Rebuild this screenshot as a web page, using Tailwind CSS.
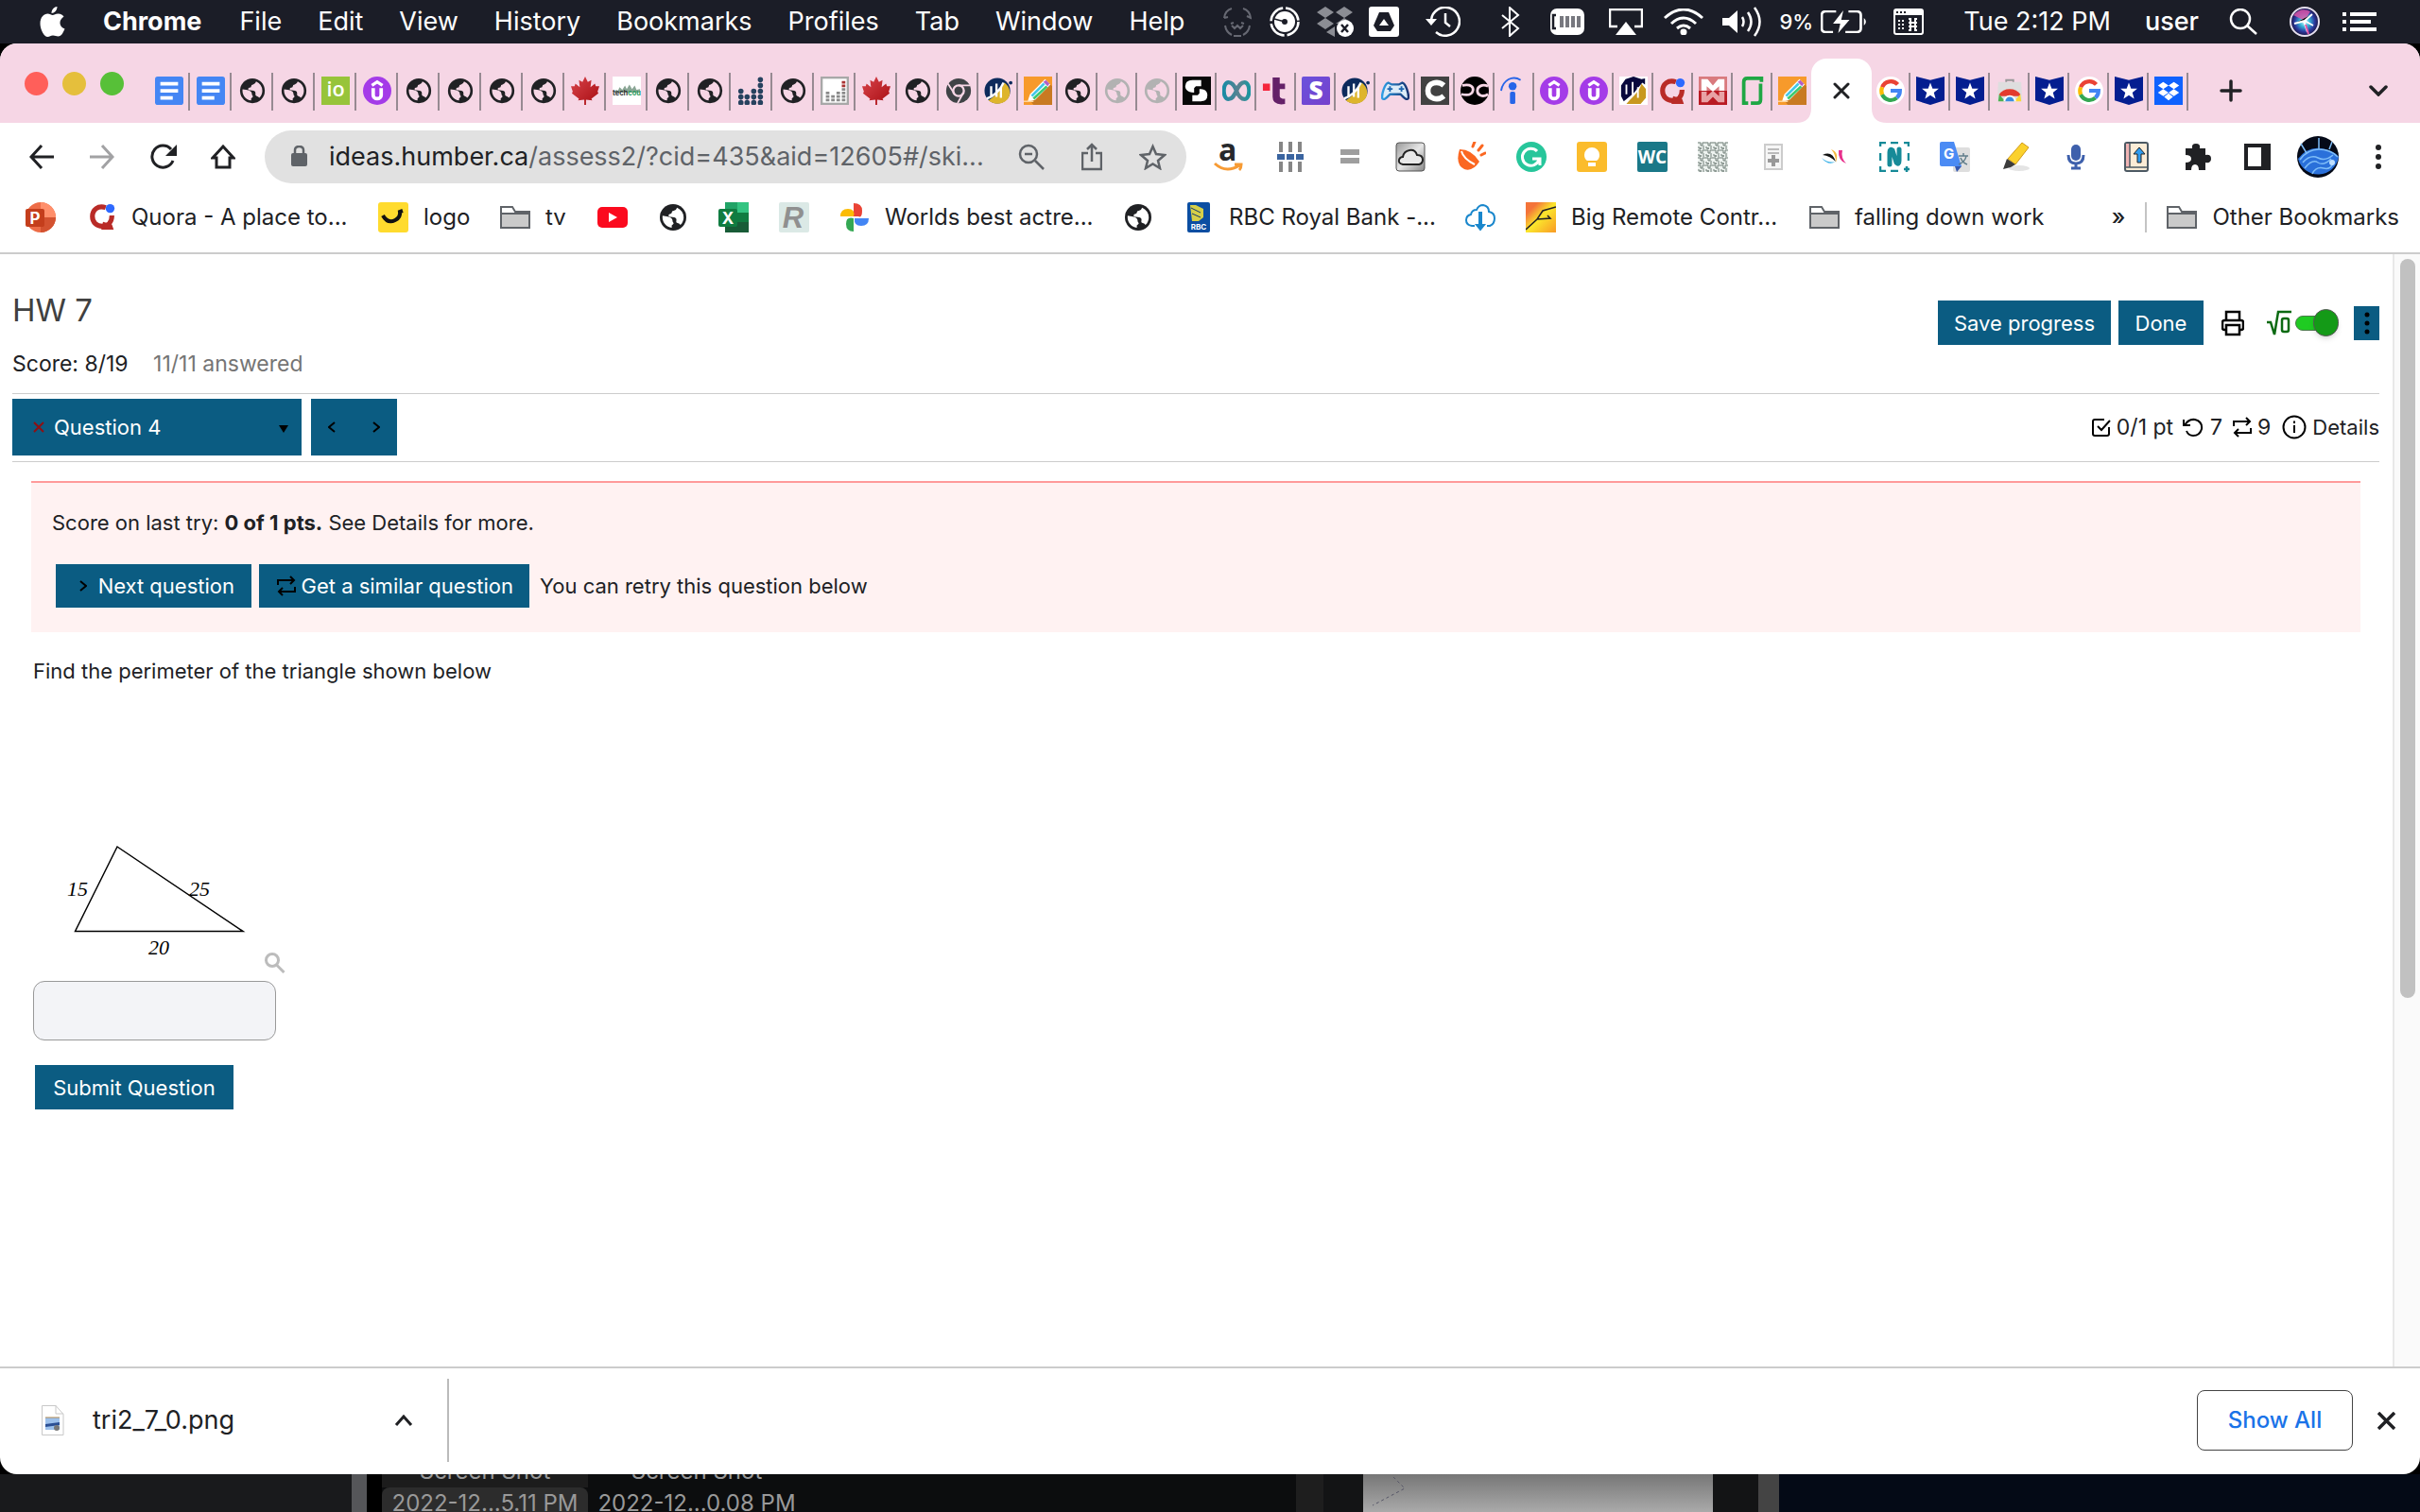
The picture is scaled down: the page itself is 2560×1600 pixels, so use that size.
<!DOCTYPE html>
<html lang="en">
<head>
<meta charset="utf-8">
<title>HW 7</title>
<script src="https://cdn.jsdelivr.net/npm/@tailwindcss/browser@4"></script>
</head>
<body class="min-h-screen flex flex-col bg-black font-['Inter',sans-serif] text-[#202124] overflow-x-hidden">

<svg class="absolute w-0 h-0" aria-hidden="true">
  <defs>
    <linearGradient id="gInf" x1="0" x2="1"><stop offset="0" stop-color="#1b8ba4"/><stop offset=".6" stop-color="#5b8290"/><stop offset="1" stop-color="#1b96a0"/></linearGradient>
    <linearGradient id="gMaple" x1="0" x2="1" y2="1"><stop offset="0" stop-color="#d8434a"/><stop offset="1" stop-color="#a80d12"/></linearGradient>
    <linearGradient id="gS" y2="1"><stop offset="0" stop-color="#6a52dc"/><stop offset="1" stop-color="#7640cc"/></linearGradient>
    <linearGradient id="gPad" x1="0" x2="1"><stop offset="0" stop-color="#2f9fe6"/><stop offset="1" stop-color="#15306f"/></linearGradient>
    <radialGradient id="gSiri"><stop offset="0" stop-color="#e8ffff"/><stop offset=".35" stop-color="#38b6d8"/><stop offset=".7" stop-color="#2b3aa0"/><stop offset="1" stop-color="#1c1440"/></radialGradient>
    <linearGradient id="gMetal" x2="1" y2="1"><stop offset="0" stop-color="#999"/><stop offset=".5" stop-color="#e6e6e6"/><stop offset="1" stop-color="#888"/></linearGradient>
    <linearGradient id="gBig" x2="1" y2="1"><stop offset=".2" stop-color="#f4743a"/><stop offset=".5" stop-color="#fbe62c"/><stop offset="1" stop-color="#f99a25"/></linearGradient>
    <pattern id="qr" width="8" height="8" patternUnits="userSpaceOnUse"><path fill="#eef3f0" d="M0 0h8v8H0z"/><path stroke="#6f7d77" fill="none" d="M0 1h3v3h2V1h3M1 5v2h3M6 4v4M3 8V6"/></pattern>
    <path id="ocean" transform="translate(-.8 -.8) scale(1.400)" d="M11 19.900C7 19.400 4 16 4 12q0-.6.1-1.200L8 11.500q3 .5 3.500 2.500 0 1.500 1 2.500-.5 1-1.500 1.500zM17.500 17.800Q17 16.500 15.500 16.300q-1.500-.3-1-2 .3-1.800-1.500-2.300L9 11.500Q8 10 9.500 9.500 11 9.500 11 8.500q0-1.500 1.500-1.500Q14.500 6.500 15 4.600 20 7 20 12q0 3.500-2.500 5.800z"/>
  </defs>
  <symbol id="docs" viewBox="0 0 32 32"><rect width="32" height="32" rx="3" fill="#4486f4"/><path fill="#fff" d="M6 6h20v4H6zM6 14h20v4H6zM6 22h14v4H6z"/></symbol>
  <symbol id="globe" viewBox="0 0 32 32"><circle cx="16" cy="16" r="14" fill="currentColor"/><use href="#ocean" fill="#f6d6e5"/></symbol>
  <symbol id="globew" viewBox="0 0 32 32"><circle cx="16" cy="16" r="14" fill="#202124"/><use href="#ocean" fill="#fff"/></symbol>
  <symbol id="io" viewBox="0 0 32 32"><rect width="32" height="32" fill="#97c43a"/><text x="16" y="22" text-anchor="middle" font-size="23" font-family="Open Sans" font-weight="600" fill="#fff">io</text></symbol>
  <symbol id="udemy" viewBox="0 0 32 32"><circle cx="16" cy="16" r="16" fill="#a43be8"/><path fill="none" stroke="#fff" stroke-width="3.500" d="M10 10l6-4 6 4"/><path fill="none" stroke="#fff" stroke-width="4" d="M11.500 13v8a4.500 4 0 0 0 9 0v-8"/></symbol>
  <symbol id="maple" viewBox="0 0 32 32"><path fill="url(#gMaple)" d="M16 0l3 6 4-2-1 8 5-4 1 3 4 0-2 6 1 2-8 6 1 2-7-1v6h-2v-6l-7 1 1-2-8-6 1-2-2-6h4l1-3 5 4-1-8 4 2z"/></symbol>
  <symbol id="tech" viewBox="0 0 32 32"><rect width="32" height="32" fill="#fff"/><path fill="#8aa695" d="M1 18l3-3 2 1 2-4 3 3 3-5 2 4 3-5 3 5 3-4 2 5 4-1v4H1z"/><text x="0" y="21" font-size="8" font-weight="700" font-family="Inter" fill="#333">tech<tspan fill="#279a5c">cou</tspan></text></symbol>
  <symbol id="bars" viewBox="0 0 32 32"><g fill="none" stroke="#27425f" stroke-width="6" stroke-linecap="round" stroke-dasharray="0 6.500"><path d="M4 29.500V15M11 29.500V21M18.500 29.500V15M26 29.500V1"/></g></symbol>
  <symbol id="barsg" viewBox="0 0 32 32"><rect x="1" y="1" width="30" height="30" fill="#fff" stroke="#a8a8a8" stroke-width="3"/><g stroke="#8a8a8a" stroke-width="4" stroke-dasharray="3 1"><path d="M8 28V16M14 28V20M20 28V16M26 28V12"/><path stroke="#a33" d="M26 12V4"/></g></symbol>
  <symbol id="chrome" viewBox="0 0 32 32"><circle cx="16" cy="16" r="14" fill="#3f4346"/><circle cx="16" cy="16" r="6" fill="none" stroke="#f6d6e5" stroke-width="2.500"/><path stroke="#f6d6e5" stroke-width="2" d="M16 10h13M11 19L4 8M21 19l-6 11"/></symbol>
  <symbol id="wolf" viewBox="0 0 32 32"><circle cx="15" cy="16" r="14.500" fill="#0c2a5c"/><path fill="#deb52c" d="M5 27c6-4 14-11 18-20 7 5 8 14 3 19-6 6-15 6-21 1z"/><path fill="none" stroke="#fff" stroke-width="2.500" d="M3 25c8-3 15-9 19-18M8 11v12M14 8v15M19 12v12"/><circle cx="30" cy="7" r="2" fill="#0c2a5c"/></symbol>
  <symbol id="wolfw" viewBox="0 0 32 32"><rect width="32" height="32" fill="#fff"/><path fill="#08083c" d="M2 22V10l5-7 9-3 9 3 4-1v7l-3-2-10 12-11 9z"/><path fill="#c8981f" d="M8 31c4-6 14-12 17-23l5 6v10l-6 7z"/><path stroke="#fff" stroke-width="2" d="M8 9v11M15 6v16M21 12v12"/></symbol>
  <symbol id="pencil" viewBox="0 0 32 32"><rect width="32" height="32" fill="#f79a2b"/><path fill="#c87a22" d="M29 8l3 3v21H11l-4-5z"/><path fill="#fff" d="M4 29l3-9L24 3l6 6-17 17z"/><path fill="#42c7e8" d="M8 21L22 7l2 2L10 23z"/><path fill="#3dca70" d="M10 24L25 10l2 2-15 14z"/><path fill="#b15fc8" d="M22 6l3-2 4 4-2 3z"/><path stroke="#ffd49a" stroke-width="1.500" d="M0 28h11"/></symbol>
  <symbol id="sblack" viewBox="0 0 32 32"><rect width="32" height="32" fill="#080808"/><path fill="#fff" d="M21 4v7h-6l-2 2v5C5 18 3 14 3 11q0-7 8-7zM11 28v-7h6l2-2v-5c8 0 9 4 9 7q0 7-8 7z"/></symbol>
  <symbol id="inf" viewBox="0 0 32 32"><path fill="none" stroke="url(#gInf)" stroke-width="4.500" d="M16 16C13 8 10 6.500 7 6.500c-7 0-7 19 0 19 4 0 6-3 9-9.500s5-9.500 9-9.500c7 0 7 19 0 19-3 0-6-1.500-9-9.500z"/></symbol>
  <symbol id="tt" viewBox="0 0 32 32"><rect y="8" x="1" width="8" height="8" fill="#f5253c"/><path fill="#642168" d="M12 1h8v7h6v6h-6v8q0 3 6 3v6q-14 2-14-8z"/></symbol>
  <symbol id="spurple" viewBox="0 0 32 32"><rect width="32" height="32" rx="2" fill="url(#gS)"/><text x="16" y="26" text-anchor="middle" font-size="28" font-weight="800" font-family="Open Sans" fill="#fff">S</text></symbol>
  <symbol id="pad" viewBox="0 0 32 32"><path fill="#dcecf8" stroke="url(#gPad)" stroke-width="2.500" d="M8 7l4 2h8l4-2c4 1 7 12 7 17-2 4-6-1-9-4H10c-3 3-7 8-9 4 0-5 3-16 7-17z"/><path stroke="#1d66b0" stroke-width="2" d="M7 14h6M10 11v6M20 14h6M23 11v6"/></symbol>
  <symbol id="cgrey" viewBox="0 0 32 32"><rect width="32" height="32" fill="#424242"/><path fill="none" stroke="#fff" stroke-width="6" d="M26 10c-7-6-18-3-18 6s11 12 18 6"/></symbol>
  <symbol id="oc" viewBox="0 0 32 32"><circle cx="16" cy="16" r="16" fill="#000"/><path fill="none" stroke="#f6d6e5" stroke-width="3" d="M2 10c10-2 13 2 12 6s-4 6-13 4M31 11c-6-3-12 0-12 5s6 8 12 4"/></symbol>
  <symbol id="ind" viewBox="0 0 32 32"><circle cx="14" cy="11" r="4.500" fill="#2765e8"/><rect x="11" y="17" width="6" height="14" rx="2" fill="#2765e8"/><path fill="none" stroke="#2765e8" stroke-width="2" d="M1 16C3 4 14-2 23 4"/></symbol>
  <symbol id="quora" viewBox="0 0 32 32"><path fill="none" stroke="#b92b27" stroke-width="5.500" d="M19 6C10 3 4 9 4 16s5 11 11 11 11-4 11-12"/><path fill="#b92b27" d="M16 22l10 3 2 6H14z"/><circle cx="24" cy="7" r="5" fill="#2e69ff"/></symbol>
  <symbol id="mred" viewBox="0 0 32 32"><path fill="#d97a7e" d="M0 0h32v16H0z"/><path fill="#b91a23" d="M0 16h32v16H0z"/><path fill="#fff" d="M3 16V3h7l6 7 6-7h7v13h-6v-5l-7 6-7-6v5z"/><path fill="#e8a2a5" d="M3 17v12h7l6-6 6 6h7V17h-6v5l-7-6-7 6v-5z"/></symbol>
  <symbol id="brk" viewBox="0 0 32 32"><path fill="none" stroke="#1fa744" stroke-width="4" d="M26 6V2H10q-4 0-4 4v24h5M25 8v18q0 4-4 4h-7"/></symbol>
  <symbol id="google" viewBox="0 0 32 32"><circle cx="16" cy="16" r="16" fill="#fff"/><g fill="none" stroke-width="4.500"><path stroke="#ea4335" d="M24 9A10.500 10.500 0 0 0 6.500 12"/><path stroke="#fbbc05" d="M6.500 12a11 11 0 0 0 0 8.500"/><path stroke="#34a853" d="M6.500 20.500A10.500 10.500 0 0 0 23 24"/><path stroke="#4285f4" d="M23 24q3.500-3 3.500-8H16"/></g></symbol>
  <symbol id="star" viewBox="0 0 32 32"><path fill="#041e90" d="M0 0l16 4L32 0v27l-16 5L0 27z"/><path fill="#fff" d="M16 7l2.500 6.500 7 .2-5.500 4.300 2 7-6-4-6 4 2-7-5.500-4.300 7-.2z"/></symbol>
  <symbol id="store" viewBox="0 0 32 32"><path fill="#dedede" d="M3 6h26l1 22H2z"/><path fill="none" stroke="#999" stroke-width="2" d="M12 6V4h8v2"/><path fill="#e33b2e" d="M4 20q4-6 12-6t12 6l-1 2H5z"/><path fill="#4caf50" d="M4 20l7 8H3z"/><path fill="#fdd835" d="M28 20l-7 8h8z"/><path fill="#fff" d="M9 28a7 7 0 1 1 14 0z"/><path fill="#3b8fe0" d="M11 28a5 5 0 1 1 10 0z"/></symbol>
  <symbol id="dbx" viewBox="0 0 32 32"><rect width="32" height="32" fill="#0f62fe"/><path fill="#fff" d="M10 6l6 4-6 4-6-4zM22 6l6 4-6 4-6-4zM10 14l6 4-6 4-6-4zM22 14l6 4-6 4-6-4zM16 19l5 4-5 4-5-4z"/></symbol>
  <symbol id="folder" viewBox="0 0 32 32"><path fill="#fff" stroke="#5f6368" stroke-width="2" d="M1 27V5h12l3 5h15v17z"/><path fill="#cacaca" stroke="#5f6368" stroke-width="2" d="M1 12h30v15H1z"/></symbol>
</svg>

<header class="h-[46px] shrink-0 bg-[#1b1d27] text-white text-[27px] flex items-center justify-between whitespace-nowrap pr-[46px]">
  <nav class="flex items-center gap-[38px] pl-[42px]">
    <svg class="w-[27px] h-8" viewBox="0 0 26 32" fill="#fff" aria-hidden="true"><path d="M18 0c0 4-3 7-6 7 0-4 3-7 6-7zM13 9c2 0 3-1.500 6-1.500 3 0 5 1.500 6 3-6 4-5 11 1 13-2 5-4 8-7 8-2 0-3-1-5.500-1S10 32 8 32C4 32 0 24 0 18c0-7 4-10.500 8-10.500 2 0 4 1.500 5 1.500z"/></svg>
    <a href="#" class="font-bold pl-[2px] pr-[2px]">Chrome</a><a href="#">File</a><a href="#">Edit</a><a href="#">View</a><a href="#">History</a><a href="#">Bookmarks</a><a href="#">Profiles</a><a href="#">Tab</a><a href="#">Window</a><a href="#">Help</a>
  </nav>
  <div class="flex items-center">
    <svg class="w-[30px] h-8" viewBox="0 0 30 32" fill="none" stroke="#666872" stroke-width="2"><path d="M1 12Q2 4 9 2M21 2q7 2 8 10l-4-2M1 12l4-1M2 20q1 7 7 10M28 20q-1 7-7 10M11 31h8M8 18l3-1M19 17l3 1M9 20l3 3 3-3 3 3 3-3"/></svg>
    <svg class="ml-[19px] w-[33px] h-8" viewBox="0 0 33 32"><circle cx="16" cy="16" r="11" fill="#fff"/><circle cx="16" cy="16" r="3" fill="#1b1d27"/><path stroke="#1b1d27" stroke-width="1.500" d="M16 16L5 13"/><circle cx="16" cy="16" r="14.500" fill="none" stroke="#fff" stroke-width="2.500" stroke-dasharray="20 3"/></svg>
    <svg class="ml-[17px] w-[39px] h-8" viewBox="0 0 39 32"><path fill="#8b8d94" d="M9 0l9 6-9 6-9-6zM29 0l9 6-9 6-9-6zM9 12l9 6-9 6-9-6zM29 12l9 6H20zM19 21v11l-9-5z"/><circle cx="30" cy="23" r="9" fill="#fff"/><path stroke="#1b1d27" stroke-width="2.500" d="M26 19l7 8M33 19l-7 8"/></svg>
    <svg class="ml-4 w-8 h-8" viewBox="0 0 32 32"><rect width="32" height="32" rx="3" fill="#fff"/><path fill="#1b1d27" d="M11 6h10l6 14-4 6H9l-4-6z"/><path fill="#fff" d="M16 13l5 7H11z"/></svg>
    <svg class="ml-7 w-[37px] h-8" viewBox="0 0 37 32" fill="none" stroke="#fff" stroke-width="2.500"><path d="M6 14A15 15 0 1 1 11 27M21 7v10l5 4"/><path fill="#fff" stroke="none" d="M0 13h12l-6 7z"/></svg>
    <svg class="ml-[43px] w-5 h-8" viewBox="0 0 20 32" fill="none" stroke="#fff" stroke-width="2"><path d="M1 9l17 14-9 8V1l9 8L1 23"/></svg>
    <svg class="ml-8 w-9 h-7" viewBox="0 0 36 28"><rect width="36" height="28" rx="7" fill="#fff"/><path stroke="#1b1d27" stroke-width="2.500" fill="none" d="M6 7H3v14h3"/><path stroke="#77787f" stroke-width="4" d="M12 8v12M18 8v12M24 8v12M30 8v12"/></svg>
    <svg class="ml-[26px] w-9 h-7" viewBox="0 0 36 28"><path fill="none" stroke="#fff" stroke-width="2.500" d="M9 19H1V1h34v18h-8"/><path fill="#fff" d="M18 14l11 14H7z"/></svg>
    <svg class="ml-[22px] w-[42px] h-7" viewBox="0 0 42 28" fill="none" stroke="#fff" stroke-width="3"><path d="M1 10q20-18 40 0M8 16q13-12 26 0M14 21q7-6 14 0"/><circle cx="21" cy="25" r="2" fill="#fff"/></svg>
    <svg class="ml-5 w-[41px] h-8" viewBox="0 0 41 32" fill="none" stroke="#fff" stroke-width="2.500"><path fill="#fff" stroke="none" d="M0 12h7l9-8v24l-9-8H0z"/><path d="M21 11q3 5 0 10M27 6q7 10 0 20M34 1q11 15 0 30"/></svg>
    <span class="ml-5 text-[22px] leading-8 font-medium">9%</span>
    <svg class="ml-2 w-[49px] h-6" viewBox="0 0 45 24" preserveAspectRatio="none" fill="none" stroke="#fff" stroke-width="2.500"><path d="M15 1H5Q1 1 1 5v14q0 4 4 4h7M27 1h8q4 0 4 4v14q0 4-4 4H24"/><path fill="#fff" stroke="none" d="M22 0L12 14h7l-2 10 11-14h-8zM42 8q4 4 0 8z"/></svg>
    <svg class="ml-[28px] w-8 h-7" viewBox="0 0 32 28"><rect x="1" y="1" width="30" height="26" rx="2" fill="none" stroke="#fff" stroke-width="2"/><path fill="#fff" d="M1 1h30v6H1z"/><path stroke="#1b1d27" stroke-width="2" stroke-dasharray="2 2" d="M3 4h10"/><path stroke="#fff" stroke-width="2" stroke-dasharray="2 2" d="M5 13h6M5 17h6M5 21h6"/><path fill="none" stroke="#fff" stroke-width="2" d="M18 13v8M23 13v8M16 15h9M16 19h9M16 11h2v4M25 11h-2v4M16 23h2v-4M25 23h-2v-4"/></svg>
    <span class="ml-[42px]">Tue 2:12 PM</span>
    <span class="ml-[36px] font-medium">user</span>
    <svg class="ml-[32px] w-[30px] h-7" viewBox="0 0 30 28" fill="none" stroke="#fff" stroke-width="2.500"><circle cx="12" cy="11" r="10"/><path d="M19 18l10 9"/></svg>
    <svg class="ml-[34px] w-8 h-8" viewBox="0 0 32 32"><circle cx="16" cy="16" r="15" fill="url(#gSiri)" stroke="#e6e0ee" stroke-width="2"/><path fill="#e455a8" d="M4 9q8-9 18-4l-6 10z" opacity=".8"/><path stroke="#fff" stroke-width="2" d="M5 18l11-3 8-7M16 15l9 5M15 15l4 12"/><path stroke="#e455a8" stroke-width="2" d="M17 19l3 10"/></svg>
    <svg class="ml-6 w-9 h-5" viewBox="0 0 36 20" fill="#fff"><path d="M0 0h4v4H0zM8 0h28v4H8zM0 8h4v4H0zM8 8h22v4H8zM0 16h4v4H0zM8 16h28v4H8z"/></svg>
  </div>
</header>

<div class="flex-1 flex flex-col bg-white rounded-[18px] overflow-hidden">
  <div class="h-[84px] bg-[#f6d6e5] flex items-end">
    <div class="flex gap-[15px] pl-[26px] w-[157px] h-full items-center">
      <span class="size-[25px] rounded-full bg-[#ff5f5a]"></span><span class="size-[25px] rounded-full bg-[#e5bf3c]"></span><span class="size-[25px] rounded-full bg-[#57c038]"></span>
    </div>
    <div id="tabs" class="flex h-[68px]"></div>
    <button aria-label="New tab" class="ml-[33px] h-[68px]"><svg class="w-6 h-6" viewBox="0 0 24 24" stroke="#202124" stroke-width="3.500" stroke-linecap="round"><path d="M12 2v20M2 12h20"/></svg></button>
    <button aria-label="Search tabs" class="ml-auto mr-[34px] h-[68px]"><svg class="w-5 h-3" viewBox="0 0 20 12" fill="none" stroke="#202124" stroke-width="3.500" stroke-linecap="round"><path d="M2 2l8 8 8-8"/></svg></button>
  </div>

  <div class="h-[73px] flex items-center pl-[31px] pr-[41px] pb-[1px]">
    <button aria-label="Back"><svg class="w-[26px] h-[26px]" viewBox="0 0 26 26" fill="none" stroke="#202124" stroke-width="3"><path d="M13 1L2 13l11 12M2 13h24"/></svg></button>
    <button aria-label="Forward" class="ml-[38px]"><svg class="w-[26px] h-[26px]" viewBox="0 0 26 26" fill="none" stroke="#a2a2a4" stroke-width="3"><path d="M13 1l11 12-11 12M24 13H0"/></svg></button>
    <button aria-label="Reload" class="ml-[38px]"><svg class="w-7 h-7" viewBox="0 0 28 28" fill="none" stroke="#202124" stroke-width="3"><path d="M24 18A11.500 11.500 0 1 1 22 6"/><path fill="#202124" stroke="none" d="M28 1v12H16z"/></svg></button>
    <button aria-label="Home" class="ml-9"><svg class="w-[26px] h-[26px]" viewBox="0 0 26 26" fill="none" stroke="#202124" stroke-width="3"><path d="M13 2L2 14h4v10h14V14h4z"/></svg></button>
    <div class="ml-[31px] flex-1 h-14 rounded-full bg-[#e1e1e1] flex items-center text-[27px] pl-7 pr-[21px] whitespace-nowrap">
      <svg class="w-[17px] h-6" viewBox="0 0 17 24"><rect y="8" width="17" height="14" rx="2" fill="#5f6368"/><path fill="none" stroke="#5f6368" stroke-width="2.500" d="M4 9V5q0-4 4.500-4T13 5v4"/></svg>
      <span class="ml-[23px]">ideas.humber.ca<span class="text-[#5f6368]">/assess2/?cid=435&amp;aid=12605#/ski...</span></span>
      <svg class="ml-auto w-7 h-7" viewBox="0 0 28 28" fill="none" stroke="#5f6368" stroke-width="2.500"><circle cx="11" cy="11" r="9"/><path d="M7 11h8M18 18l9 9"/></svg>
      <svg class="ml-[39px] w-[22px] h-[30px]" viewBox="0 0 22 30" fill="none" stroke="#5f6368" stroke-width="2.500"><path d="M7 11H1v17h20V11h-6M11 20V2M6 7l5-5 5 5"/></svg>
      <svg class="ml-[39px] w-[29px] h-7" viewBox="0 0 29 28" fill="none" stroke="#5f6368" stroke-width="2.500"><path d="M14.500 3l3.500 8 9 1-7 6 2 8-7.500-4.500L7 26l2-8-7-6 9-1z"/></svg>
    </div>
    <div class="ml-[29px] flex items-center gap-8">
      <svg class="size-8 overflow-visible" viewBox="0 0 32 32"><text x="5" y="20" font-size="32" font-weight="700" font-family="Open Sans" fill="#26282c">a</text><path fill="none" stroke="#f79b34" stroke-width="3" d="M1 23q12 11 26 2M22 24h7q0 4-2 6"/></svg>
      <svg class="size-8" viewBox="0 0 32 32"><path stroke="#868686" stroke-width="4" d="M7 0v32M17 0v32M27 0v32"/><path fill="#fff" d="M3 11h28v10H3z"/><path fill="#3a64a0" d="M3 13h8v6H3zM13 13h8v6h-8zM23 13h8v6h-8z"/></svg>
      <svg class="size-8" viewBox="0 0 32 32"><path fill="#9e9e9e" d="M6 8h20v6H6zM6 17h20v6H6z"/></svg>
      <svg class="size-8" viewBox="0 0 32 32"><rect x="1" y="1" width="30" height="30" rx="3" fill="url(#gMetal)" stroke="#555"/><path fill="#e8e8e8" stroke="#222" stroke-width="2" d="M8 24q-5-1-4-5 1-3 4-3 1-6 7-7 6-1 8 5 6 0 6 5 0 4-4 5z"/></svg>
      <svg class="size-8" viewBox="0 0 32 32"><path fill="#fb6721" d="M4 8q13 0 21 13-7 11-16 8Q-1 24 4 8z"/><path stroke="#fb6721" stroke-width="3" stroke-linecap="round" d="M18 5l2-5M24 9l4-5M27 14l4-2"/><path fill="none" stroke="#fff" stroke-width="2" d="M6 10q2 8 14 14"/></svg>
      <svg class="size-8" viewBox="0 0 32 32"><circle cx="16" cy="16" r="16" fill="#27c69b"/><path fill="none" stroke="#fff" stroke-width="3" d="M22 10a9 9 0 1 0 2 9M17 18h8v7"/></svg>
      <svg class="size-8" viewBox="0 0 32 32"><rect width="32" height="32" rx="3" fill="#fbbc2c"/><path fill="#fff" d="M11 20q-3-2-3-6a8 8 0 0 1 16 0q0 4-3 6zM12 22h8v4h-8z"/></svg>
      <svg class="size-8" viewBox="0 0 32 32"><rect width="32" height="32" rx="2" fill="#1a7888"/><text x="16" y="23" text-anchor="middle" font-size="19" font-weight="700" font-family="Open Sans" fill="#fff">WC</text></svg>
      <svg class="size-8" viewBox="0 0 32 32"><rect width="32" height="32" fill="url(#qr)"/></svg>
      <svg class="size-8" viewBox="0 0 32 32"><path fill="#f6f6f6" stroke="#ccc" stroke-width="2" d="M7 3h18v26H7z"/><path stroke="#bbb" stroke-width="2" d="M10 8h12M10 12h12"/><path stroke="#999" stroke-width="4" d="M10 20h12M16 14v12"/></svg>
      <svg class="size-8" viewBox="0 0 32 32"><path fill="#f5b942" d="M13 8q9 3 5 14 0-9-5-14z"/><path fill="#111" d="M4 14q10-5 14 7-6-6-14-7z"/><path fill="#3db2e8" d="M3 17q7 6 15 4-8 5-15-4z"/><path fill="#e8308c" d="M21 9h4q-2 8 4 14-9-3-8-14z"/></svg>
      <svg class="size-8" viewBox="0 0 32 32" fill="none" stroke="#168a98"><path stroke-width="2.500" d="M1 5V1h6M12 1h8M26 1h5v4M1 12v8M31 12v8M1 26v5h6M12 31h8M26 29h6M29 26v6"/><path stroke-width="5" stroke-linecap="round" d="M11 24V11q0-4 3-2l4 13q3 3 3-2V8"/></svg>
      <svg class="size-8" viewBox="0 0 32 32"><rect x="14" y="6" width="18" height="26" rx="2" fill="#dedede"/><path fill="#4b8bf4" d="M0 2q0-2 2-2h13l8 26H2q-2 0-2-2z"/><path fill="#3357b0" d="M16 26h7l-5 6z"/><text x="4" y="18" font-size="15" font-weight="700" font-family="Inter" fill="#fff">G</text><path fill="none" stroke="#607d8b" stroke-width="1.500" d="M20 15h10M25 12v3M28 15q-1 6-8 9M22 17q2 5 7 7"/></svg>
      <svg class="size-8" viewBox="0 0 32 32"><ellipse cx="20" cy="28" rx="11" ry="3" fill="#e4e4e4"/><path fill="#fbd12c" stroke="#d09a18" d="M8 18L23 1l7 5-14 18z"/><path fill="#3c3c3c" d="M7 18l9 6-5 3-8 2z"/></svg>
      <svg class="size-8" viewBox="0 0 32 32"><rect x="11" y="3" width="10" height="17" rx="5" fill="#3e60ac"/><path fill="none" stroke="#3e60ac" stroke-width="3" d="M8 14q0 9 8 9t8-9M16 23v5M11 28h10"/></svg>
      <svg class="size-8" viewBox="0 0 32 32"><rect x="4" y="1" width="24" height="30" rx="2" fill="#fbecd6" stroke="#4c5963" stroke-width="2"/><path fill="#f0b4b4" d="M5 2h4v25H5z"/><path stroke="#4c5963" stroke-width="1.500" d="M4 27h24M9 2v25"/><path fill="#2f9cf0" stroke="#222" d="M19 6l6 7h-4v9h-4v-9h-4z"/></svg>
      <svg class="size-8" viewBox="0 0 32 32"><path fill="#202124" d="M4 7h7q-1-5 4-5t4 5h6v7q6-1 6 4t-6 4v8h-7q0-6-4-6t-4 6H4v-8q6 0 6-4t-6-4z"/></svg>
      <svg class="size-8" viewBox="0 0 32 32"><path fill="#202124" fill-rule="evenodd" d="M2 2h28v28H2zM6 6v20h14V6z"/></svg>
      <svg class="w-11 h-11 -mx-[6px]" viewBox="0 0 44 44"><circle cx="22" cy="22" r="22" fill="#050a18"/><path fill="#2a70da" d="M1 24q10-13 24-11 14 2 19 9a22 22 0 0 1-43 2z"/><path fill="none" stroke="#7fbdf7" stroke-width="1.500" d="M3 25q8-11 20-11t20 8M6 28q8-9 16-5t16-3M8 34q8-10 14-6t14-4M16 40q4-8 12-6t10-6M23 14V2M10 18L4 8M34 14l3-8"/><circle cx="37" cy="28" r="3" fill="#bfe0ff"/></svg>
      <button aria-label="Chrome menu"><svg class="size-8 -mr-[13px]" viewBox="0 0 32 32" fill="#202124"><circle cx="16" cy="6" r="3"/><circle cx="16" cy="16" r="3"/><circle cx="16" cy="26" r="3"/></svg></button>
    </div>
  </div>

  <div class="h-[66px] border-b-2 border-[#ccc] flex items-center text-[24px] leading-8 pb-[10px] pl-[27px] pr-[22px] whitespace-nowrap">
    <a href="#" aria-label="PowerPoint"><svg class="size-8" viewBox="0 0 32 32"><circle cx="16" cy="16" r="16" fill="#ed6c47"/><path fill="#ff8f6b" d="M16 0a16 16 0 0 1 16 16H16z"/><path fill="#d35230" d="M16 16h16a16 16 0 0 1-16 16z"/><rect y="7" width="20" height="19" rx="2" fill="#c43e1c"/><text x="10" y="23" text-anchor="middle" font-size="17" font-weight="700" font-family="Inter" fill="#fff">P</text></svg></a>
    <a href="#" class="flex ml-[35px] w-[306px]"><svg class="size-[30px]"><use href="#quora"/></svg><span class="ml-[15px]">Quora - A place to...</span></a>
    <a href="#" class="flex w-[129px]"><svg class="size-8" viewBox="0 0 32 32"><rect width="32" height="32" rx="3" fill="#ffdb2e"/><path fill="none" stroke="#111" stroke-width="4" d="M5 14q5 9 13 5 6-3 5-9l3-1"/></svg><span class="ml-4">logo</span></a>
    <a href="#" class="flex w-[103px]"><svg class="size-8"><use href="#folder"/></svg><span class="ml-4">tv</span></a>
    <a href="#" aria-label="YouTube"><svg class="size-8" viewBox="0 0 32 32"><rect y="5" width="32" height="22" rx="5" fill="#fb0a1e"/><path fill="#fff" d="M12 11l9 5-9 5z"/></svg></a>
    <a href="#" aria-label="Site" class="ml-8"><svg class="size-8"><use href="#globew"/></svg></a>
    <a href="#" aria-label="Excel" class="ml-8"><svg class="size-8" viewBox="0 0 32 32"><path fill="#21a366" d="M7 0h25v32H7z"/><path fill="#33c481" d="M20 0h12v11H20z"/><path fill="#107c41" d="M20 11h12v11H20z"/><path fill="#185c37" d="M7 21h25v11H7z"/><rect y="7" width="20" height="19" rx="2" fill="#107c41"/><text x="10" y="23" text-anchor="middle" font-size="17" font-weight="700" font-family="Inter" fill="#fff">X</text></svg></a>
    <a href="#" aria-label="R" class="ml-8"><svg class="size-8 overflow-visible" viewBox="0 0 32 32"><rect width="32" height="32" rx="2" fill="#dbe9e6"/><text x="15" y="27" text-anchor="middle" font-size="31" font-weight="700" font-style="italic" font-family="Liberation Sans" fill="#909090">R</text></svg></a>
    <a href="#" class="flex ml-8 w-[300px]"><svg class="size-8" viewBox="0 0 32 32"><path fill="#ea4335" d="M15 1q9 0 9 8t-4 6h-5z"/><path fill="#fbbc04" d="M1 15q0-8 8-8t6 8z"/><path fill="#34a853" d="M15 31q-8 0-8-8t8-6z"/><path fill="#4285f4" d="M31 17q0 8-8 8t-7-8z"/></svg><span class="ml-4">Worlds best actre...</span></a>
    <a href="#" aria-label="Site"><svg class="size-8"><use href="#globew"/></svg></a>
    <a href="#" class="flex ml-8 w-[298px]"><svg class="size-8" viewBox="0 0 32 32"><rect x="4" width="24" height="32" rx="2" fill="#0b4ea2"/><path fill="#d6cf48" d="M7 3h6l8 4v9l-5 4H9z"/><path stroke="#12386e" d="M8 6l10 5M9 12l9 4"/><text x="16" y="29" text-anchor="middle" font-size="8" font-weight="700" font-family="Inter" fill="#fff">RBC</text></svg><span class="ml-4">RBC Royal Bank -...</span></a>
    <a href="#" aria-label="Cloud download"><svg class="size-8" viewBox="0 0 32 32" fill="none" stroke="#1a87cc" stroke-width="2"><path d="M10 25H7q-6-1-6-6t5-6q1-5 6-5 2-5 7-5 6 1 6 7 6 1 6 7t-5 8h-3"/><path stroke-width="4" d="M16 10v15"/><path fill="#1a87cc" d="M12 24h8l-4 5z"/></svg></a>
    <a href="#" class="flex ml-8 w-[300px]"><svg class="size-8" viewBox="0 0 32 32"><rect width="32" height="32" fill="url(#gBig)"/><path fill="none" stroke="#222" stroke-width="1.500" d="M0 29l12-11 6-9 14-4M12 18l14-1-3-3"/></svg><span class="ml-4">Big Remote Contr...</span></a>
    <a href="#" class="flex"><svg class="size-8"><use href="#folder"/></svg><span class="ml-4">falling down work</span></a>
    <button class="ml-auto font-medium">»</button>
    <span class="ml-[21px] w-[2px] h-8 bg-[#c4c4c4]"></span>
    <a href="#" class="flex ml-[21px]"><svg class="size-8"><use href="#folder"/></svg><span class="ml-4">Other Bookmarks</span></a>
  </div>

  <div class="flex-1 flex">
    <main class="flex-1 pl-[13px] pr-[14px] text-[22px] leading-9">
      <div class="flex justify-between border-b border-[#ccc] pt-[37px] pb-[13px]">
        <div>
          <h1 class="text-[33px] leading-[44px] text-[#404040]">HW 7</h1>
          <p class="mt-[17px] text-[23px]">Score: 8/19 <span class="ml-5 text-[#757575]">11/11 answered</span></p>
        </div>
        <div class="flex items-center h-[47px] mt-3">
          <button class="h-[47px] w-[183px] bg-[#0b5c82] text-white">Save progress</button>
          <button class="ml-2 h-[47px] w-[90px] bg-[#0b5c82] text-white">Done</button>
          <button aria-label="Print" class="ml-[19px]"><svg class="w-6 h-7" viewBox="0 0 24 28" fill="none" stroke="#000" stroke-width="2.500"><path d="M5 11V2h14v9M5 21H3q-2 0-2-2v-6q0-2 2-2h18q2 0 2 2v6q0 2-2 2h-2M5 16h14v10H5z"/></svg></button>
          <label class="flex items-center ml-6"><svg class="w-[26px] h-7" viewBox="0 0 26 28" fill="none" stroke="#0b6a12" stroke-width="2.500"><path d="M0 13h4l4 13 4-24h14"/><rect x="16" y="9" width="7" height="14" rx="2"/></svg>
            <span class="relative ml-1 w-[46px] h-[30px]"><input type="checkbox" checked aria-label="Equation editor" class="appearance-none absolute left-0 top-[7px] w-9 h-4 rounded-full bg-[#1fcb22] border border-[#4c7a4c]"><span class="absolute right-0 top-0 w-[27px] h-[29px] rounded-full bg-[#149a17] border border-[#555] shadow-md"></span></span>
          </label>
          <button aria-label="More options" class="ml-4 w-[27px] h-9 bg-[#0b5c82] flex justify-center items-center"><svg class="w-2 h-6" viewBox="0 0 8 24"><circle cx="4" cy="3" r="2.500"/><circle cx="4" cy="12" r="2.500"/><circle cx="4" cy="21" r="2.500"/></svg></button>
        </div>
      </div>

      <div class="flex justify-between items-center border-b border-[#ccc] pt-[5px] pb-[6px]">
        <div class="flex gap-[10px]">
          <button class="w-[306px] h-[60px] bg-[#0b5c82] text-white flex items-center pl-[22px] pr-[14px]"><svg class="w-3 h-3" viewBox="0 0 12 12" stroke="#8e1013" stroke-width="2"><path d="M1 1l10 10M11 1L1 11"/></svg><span class="ml-[10px]">Question 4</span><svg class="ml-auto w-[10px] h-2 mt-1" viewBox="0 0 10 8"><path d="M0 0h10L5 8z"/></svg></button>
          <div class="w-[91px] h-[60px] bg-[#0b5c82] flex items-center justify-between px-[18px]">
            <button aria-label="Previous"><svg class="w-2 h-3" viewBox="0 0 8 12" fill="none" stroke="#000" stroke-width="2"><path d="M7 1L1 6l6 5"/></svg></button>
            <button aria-label="Next"><svg class="w-2 h-3" viewBox="0 0 8 12" fill="none" stroke="#000" stroke-width="2"><path d="M1 1l6 5-6 5"/></svg></button>
          </div>
        </div>
        <div class="flex items-center">
          <svg class="w-5 h-5" viewBox="0 0 20 20" fill="none" stroke="#000" stroke-width="2"><path d="M13 2H3Q1 2 1 4v13q0 2 2 2h13q2 0 2-2v-7M6 9l4 4 9-10"/></svg>
          <span class="ml-[6px] text-[23px]">0/1 pt</span>
          <svg class="ml-[10px] w-[22px] h-5" viewBox="0 0 22 20" fill="none" stroke="#000" stroke-width="2"><path d="M1 2v6h7M2 8q4-7 11-6 8 2 7 10-2 7-9 7-5 0-7-5"/></svg>
          <span class="ml-[7px] text-[23px]">7</span>
          <svg class="ml-[11px] w-5 h-[22px]" viewBox="0 0 20 22" fill="none" stroke="#000" stroke-width="2"><path d="M1 10V5h17M14 1l4 4-4 4M19 12v5H2M6 13l-4 4 4 4"/></svg>
          <span class="ml-[6px] text-[23px]">9</span>
          <button class="ml-3 flex items-center"><svg class="w-[26px] h-[26px]" viewBox="0 0 26 26" fill="none" stroke="#000" stroke-width="2"><circle cx="13" cy="13" r="11.500"/><path d="M13 11v8M13 6.500v2.500"/></svg><span class="ml-[6px]">Details</span></button>
        </div>
      </div>

      <section class="mt-5 mx-5 h-40 border-t-2 border-[#ff9a9a] bg-[#fff2f2] pt-6">
        <p class="pl-[22px]">Score on last try: <b>0 of 1 pts.</b> See Details for more.</p>
        <div class="mt-[26px] pl-[26px] flex items-center">
          <button class="h-[46px] w-[207px] bg-[#0b5c82] text-white flex items-center justify-end pr-[18px]"><svg class="w-2 h-3 mr-3" viewBox="0 0 8 12" fill="none" stroke="#000" stroke-width="2"><path d="M1 1l6 5-6 5"/></svg>Next question</button>
          <button class="ml-2 h-[46px] w-[286px] bg-[#0b5c82] text-white flex items-center justify-end pr-[17px]"><svg class="w-5 h-[22px] mr-[6px]" viewBox="0 0 20 22" fill="none" stroke="#000" stroke-width="2"><path d="M1 10V5h17M14 1l4 4-4 4M19 12v5H2M6 13l-4 4 4 4"/></svg>Get a similar question</button>
          <span class="ml-[11px]">You can retry this question below</span>
        </div>
      </section>

      <form class="pl-[22px] mt-[23px]">
        <label for="answer" class="block">Find the perimeter of the triangle shown below</label>
        <figure class="mt-[148px] h-[154px] flex items-end">
          <svg class="w-[245px] h-[154px]" viewBox="0 0 245 154" font-family="Liberation Serif" font-style="italic" font-size="22"><path fill="none" stroke="#000" stroke-width="1.500" d="M44.500 109.500L89 20l133 89.500z"/><text x="36" y="72">15</text><text x="165" y="72">25</text><text x="122" y="134">20</text></svg>
          <svg class="w-[22px] h-[22px]" viewBox="0 0 22 22" fill="none" stroke="#bcbcbc" stroke-width="3"><circle cx="8" cy="8" r="6.500"/><path d="M12.500 13l8 8"/></svg>
        </figure>
        <input id="answer" type="text" class="mt-2 block w-[257px] h-[63px] rounded-[12px] border border-[#999] bg-[#f3f4f7] px-3">
        <button type="button" class="mt-[26px] ml-[2px] h-[47px] w-[210px] bg-[#0b5c82] text-white">Submit Question</button>
      </form>
    </main>
    <div class="w-[29px] border-l-2 border-[#e8e8e8] bg-[#fafafa] flex flex-col items-center pt-[5px]"><span class="w-4 h-[782px] rounded-full bg-[#c1c1c1]"></span></div>
  </div>

  <footer class="h-[114px] border-t-2 border-[#ccc] flex items-center pl-[44px] pr-[26px] pb-[2px]">
    <svg class="w-6 h-8" viewBox="0 0 24 32"><path fill="#fff" stroke="#c8c8c8" d="M.5.500H15l8 9v22H.500z"/><path fill="none" stroke="#c8c8c8" d="M15 0v9h8"/><path fill="#9cc0ec" d="M4 13h15v13H4z"/><path fill="#2b4f94" d="M4 20l15-2v3L4 23z"/><path stroke="#b08a52" d="M4 13h15"/><circle cx="16" cy="24" r="3" fill="#777"/></svg>
    <span class="ml-[30px] text-[27px]">tri2_7_0.png</span>
    <button aria-label="Download options" class="ml-[169px]"><svg class="w-5 h-3" viewBox="0 0 20 12" fill="none" stroke="#202124" stroke-width="3"><path d="M2 11l8-9 8 9"/></svg></button>
    <span class="ml-[36px] w-[2px] h-[88px] bg-[#bbb]"></span>
    <button class="ml-auto w-[165px] h-16 border border-[#444] rounded-lg text-[#1a73e8] text-[24px] font-medium">Show All</button>
    <button aria-label="Close" class="ml-[26px]"><svg class="w-[19px] h-[19px]" viewBox="0 0 19 19" stroke="#202124" stroke-width="3.500"><path d="M1 1l17 17M18 1L1 18"/></svg></button>
  </footer>
</div>

<div class="h-10 shrink-0 overflow-hidden flex text-[24px] leading-[26px] text-[#999] text-center whitespace-nowrap bg-[#0c0d0e]">
  <div class="w-[372px] shrink-0 bg-[#191a1c]"></div>
  <div class="w-4 shrink-0 bg-[#555659]"></div>
  <div class="w-4 shrink-0 bg-black"></div>
  <div class="w-[218px] shrink-0"><div class="-mt-4 h-[30px] bg-[#1c1c1c]">Screen Shot</div><div class="bg-[#2c2c2c] rounded-t-lg h-[30px] pt-1">2022-12...5.11 PM</div></div>
  <div class="w-[230px] shrink-0"><div class="-mt-4 h-[30px]">Screen Shot</div><div class="pt-1">2022-12...0.08 PM</div></div>
  <div class="flex-1"></div>
  <div class="w-[29px] bg-[#1e1e1e]"></div>
  <div class="w-[42px] bg-[#131415]"></div>
  <div class="w-[370px] bg-linear-to-b from-[#777] to-[#aaa]"><svg class="w-12 h-9 ml-2" viewBox="0 0 48 36" fill="none" stroke="#556"><path stroke-dasharray="3 3" d="M24 3l12 12L2 33"/></svg></div>
  <div class="w-12 bg-[#131415]"></div>
  <div class="w-[22px] bg-[#444]"></div>
  <div class="w-[678px] bg-[#040a16]"></div>
</div>

<script>
  const wide = "docs docs globe globe io udemy globe globe globe globe maple tech globe globe bars globe barsg maple globe".split(" ");
  const narrow = "chrome wolf pencil globe idle idle sblack inf tt spurple wolf pad cgrey oc ind udemy udemy wolfw quora mred brk pencil active google star star store star google star dbx".split(" ");
  const icon = n => n === "idle"
    ? '<svg class="size-[30px] text-[#b2b2b2]"><use href="#globe"/></svg>'
    : `<svg class="size-[30px]"><use href="#${n}"/></svg>`;
  const sep = '<span class="absolute right-0 top-[15px] w-[2px] h-10 bg-[#978a92]"></span>';
  const html = [
    ...wide.map(n => `<button aria-label="${n} tab" class="relative w-11 h-[68px] flex items-center justify-center">${icon(n)}${sep}</button>`),
    ...narrow.map((n, i) => n === "active"
      ? '<button aria-label="Close tab" class="relative w-16 -mx-[1px] h-[68px] rounded-t-[16px] bg-white flex items-center justify-center"><svg class="absolute -left-4 bottom-0 size-4" viewBox="0 0 16 16"><path fill="#fff" d="M16 0v16H0Q16 16 16 0z"/></svg><svg class="absolute -right-4 bottom-0 size-4" viewBox="0 0 16 16"><path fill="#fff" d="M0 0v16h16Q0 16 0 0z"/></svg><svg class="size-[18px]" viewBox="0 0 18 18" stroke="#202124" stroke-width="3" stroke-linecap="round"><path d="M2 2l14 14M16 2L2 16"/></svg></button>'
      : `<button aria-label="${n} tab" class="relative w-[42px] h-[68px] flex items-center justify-center">${icon(n)}${narrow[i + 1] === "active" ? "" : sep}</button>`)
  ];
  document.getElementById("tabs").innerHTML = html.join("");
</script>
</body>
</html>
